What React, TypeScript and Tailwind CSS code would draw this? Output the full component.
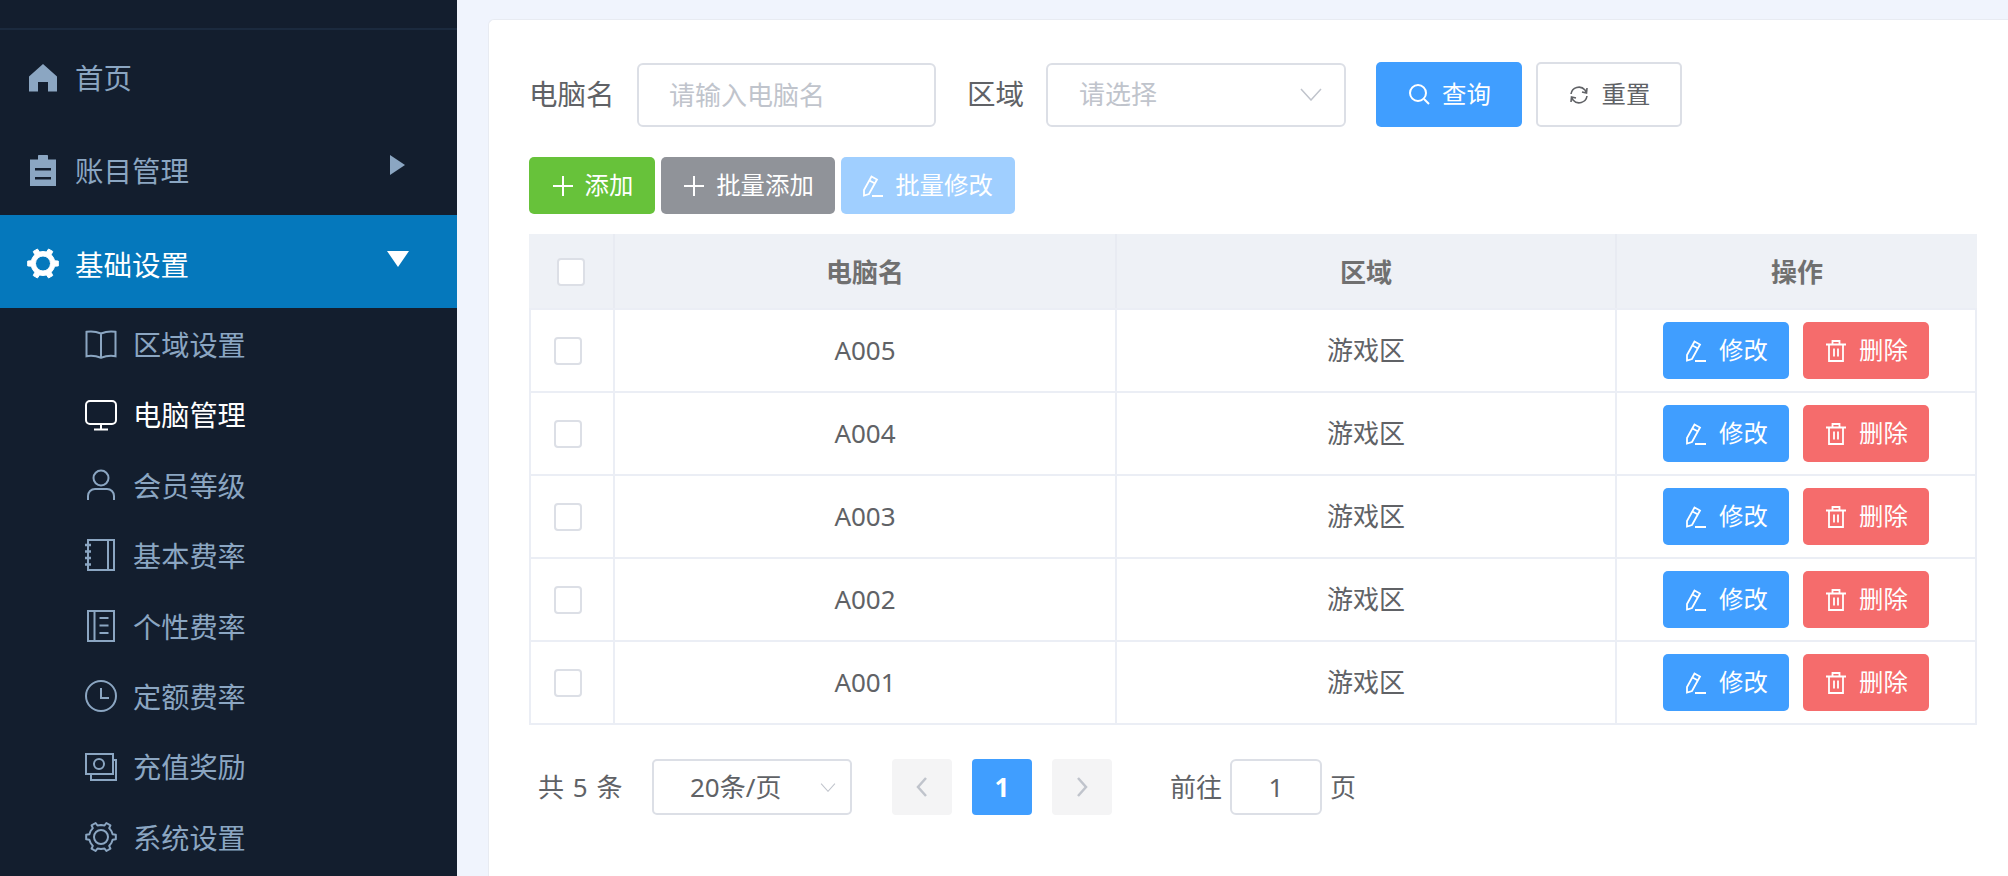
import React from 'react';

const cjk = "font-['Noto_Sans','Noto_Sans_CJK_SC',sans-serif]";

// six tooth gear outline, teeth pointing left and right like the reference
const gearPath = (outer: number, inner: number) => {
    const pts: string[] = [];
    for (let i = 0; i < 6; i++) {
        const a = (i * 60 * Math.PI) / 180;
        [[-30, inner], [-13, inner], [-9, outer], [9, outer], [13, inner]].forEach(([d, r]) => {
            const t = a + (d * Math.PI) / 180;
            pts.push(`${(16 + r * Math.cos(t)).toFixed(2)} ${(16 + r * Math.sin(t)).toFixed(2)}`);
        });
    }
    return `M${pts.join('L')}Z`;
};

const HomeIcon = () => (
    <svg viewBox="0 0 28 28" className="w-[28px] h-[28px]" fill="currentColor">
        <path d="M14 0L28 12.500V27.500H19V18H9V27.500H0V12.500z" />
    </svg>
);

const ClipboardIcon = () => (
    <svg viewBox="0 0 26 31" className="w-[26px] h-[31px]" fill="currentColor">
        <path fillRule="evenodd" d="M8 4.500V1c0-.6.4-1 1-1h8c.6 0 1 .4 1 1v3.500h8V31H0V4.500h8zM5 13v2.500h16V13H5zM5 22v2.500h16V22H5z" />
    </svg>
);

const GearFill = () => (
    <svg viewBox="0 0 32 32" className="w-[33px] h-[33px]" fill="currentColor">
        <path fillRule="evenodd" strokeLinejoin="round" stroke="currentColor" strokeWidth="1" d={`${gearPath(15.500, 12)}M16 8.500a7.500 7.500 0 1 0 0 15a7.500 7.500 0 1 0 0-15z`} />
    </svg>
);

const BookIcon = () => (
    <svg viewBox="0 0 32 32" className="w-[32px] h-[32px]" fill="none" stroke="currentColor" strokeWidth="2">
        <path d="M16 5.500C12 3.800 6 3 1.500 3.800v24.400c4.500-.8 10.500 0 14.500 1.500 4-1.500 10-2.300 14.500-1.500V3.800C26 3 20 3.800 16 5.500zM16 5.500v24" />
    </svg>
);

const MonitorIcon = () => (
    <svg viewBox="0 0 32 32" className="w-[32px] h-[32px]" fill="none" stroke="currentColor" strokeWidth="2">
        <path d="M5 2h22a4 4 0 0 1 4 4v15a4 4 0 0 1-4 4H5a4 4 0 0 1-4-4V6a4 4 0 0 1 4-4zM16 25v5M9 30.500h14" />
    </svg>
);

const UserIcon = () => (
    <svg viewBox="0 0 32 32" className="w-[32px] h-[32px]" fill="none" stroke="currentColor" strokeWidth="2">
        <circle cx="16" cy="9" r="7.500" />
        <path d="M3 31v-4a7 7 0 0 1 7-7h12a7 7 0 0 1 7 7v4" />
    </svg>
);

const NotebookOne = () => (
    <svg viewBox="0 0 32 32" className="w-[32px] h-[32px]" fill="none" stroke="currentColor" strokeWidth="2">
        <path d="M3 1h26v30H3zM23 1v30" />
        <path d="M0 6h6M0 12.500h6M0 19h6M0 25.500h6" strokeWidth="2.500" />
    </svg>
);

const NotebookTwo = () => (
    <svg viewBox="0 0 32 32" className="w-[32px] h-[32px]" fill="none" stroke="currentColor" strokeWidth="2">
        <path d="M3 1h26v30H3zM9.500 1v30M14.500 8h9M14.500 15.500h9M14.500 23h9" />
    </svg>
);

const ClockIcon = () => (
    <svg viewBox="0 0 32 32" className="w-[32px] h-[32px]" fill="none" stroke="currentColor" strokeWidth="2">
        <circle cx="16" cy="16" r="15" />
        <path d="M16 8v10h8" />
    </svg>
);

const MoneyIcon = () => (
    <svg viewBox="0 0 32 32" className="w-[32px] h-[32px]" fill="none" stroke="currentColor" strokeWidth="2">
        <path d="M1 3h27v20H1zM28 9h3v20H6v-6" />
        <circle cx="14" cy="13" r="5" />
    </svg>
);

const GearOutline = () => (
    <svg viewBox="0 0 32 32" className="w-[32px] h-[32px]" fill="none" stroke="currentColor" strokeWidth="2">
        <path d={gearPath(15, 12)} strokeLinejoin="round" />
        <circle cx="16" cy="16" r="7" />
    </svg>
);

const PencilIcon = () => (
    <svg viewBox="0 0 20 22" className="h-[22px] w-[20px]" fill="none" stroke="currentColor" strokeWidth="1.800">
        <path d="M8.500 1.500L14 4.500 6 19 1 20.500 1 15zM6.500 5.500L12 8.500M9 21h11" />
    </svg>
);

const PlusIcon = () => (
    <svg viewBox="0 0 20 20" className="w-[20px] h-[20px]" fill="none" stroke="currentColor" strokeWidth="2">
        <path d="M10 0v20M0 10h20" />
    </svg>
);

const TrashIcon = () => (
    <svg viewBox="0 0 20 22" className="w-[20px] h-[22px]" fill="none" stroke="currentColor" strokeWidth="1.800">
        <path d="M0 4.500h20M6.500 4.500V1h7v3.500M3 4.500V21h14V4.500M8 8.500v8M12 8.500v8" />
    </svg>
);

const SearchIcon = () => (
    <svg viewBox="0 0 21 21" className="w-[21px] h-[21px]" fill="none" stroke="currentColor" strokeWidth="2">
        <circle cx="9" cy="9" r="8" />
        <path d="M15 15l5 5" />
    </svg>
);

const RefreshIcon = () => (
    <svg viewBox="0 0 18 18" className="w-[18px] h-[18px]" fill="none" stroke="currentColor" strokeWidth="1.600">
        <path d="M1 8a8 8 0 0 1 14-4l1.500 3M17 2l-.5 5L12 6M17 10a8 8 0 0 1-14 4l-1.500-3M1 16l.5-5L6 12" />
    </svg>
);

const Chevron = ({ className }: { className: string }) => (
    <svg viewBox="0 0 22 13" className={className} fill="none" stroke="currentColor" strokeWidth="1.500">
        <path d="M1 1l10 11L21 1" />
    </svg>
);

const subMenus = [
    { label: '区域设置', icon: <BookIcon /> },
    { label: '电脑管理', icon: <MonitorIcon />, active: true },
    { label: '会员等级', icon: <UserIcon /> },
    { label: '基本费率', icon: <NotebookOne /> },
    { label: '个性费率', icon: <NotebookTwo /> },
    { label: '定额费率', icon: <ClockIcon /> },
    { label: '充值奖励', icon: <MoneyIcon /> },
    { label: '系统设置', icon: <GearOutline /> },
];

const rows = ['A005', 'A004', 'A003', 'A002', 'A001'];

const App: React.FC = () => {
    return (
        <div className={`flex h-[876px] w-[2008px] overflow-hidden bg-[#f0f4fd] ${cjk}`}>
            <aside className="w-[457px] shrink-0 bg-[#131e2e] text-[#8ba6c2]">
                <div className="h-[30px] border-b-2 border-[#1b2a3e]"></div>

                <div className="flex h-[92px] items-center gap-[16px] pl-[27px] pt-[3px] text-[28.5px]">
                    <span className="flex w-[32px] justify-center"><HomeIcon /></span>
                    <span className="pt-[2px]">首页</span>
                </div>
                <div className="relative flex h-[93px] items-center gap-[16px] pl-[27px] pt-[3px] text-[28.5px]">
                    <span className="flex w-[32px] justify-center"><ClipboardIcon /></span>
                    <span className="pt-[2px]">账目管理</span>
                    <span className="absolute left-[390px] top-[33px] h-0 w-0 border-y-[10px] border-l-[15px] border-y-transparent border-l-[#8ba6c2]"></span>
                </div>
                <div className="relative flex h-[93px] items-center gap-[16px] bg-[#0578bc] pl-[27px] pt-[3px] text-[28.5px] text-white">
                    <span className="flex w-[32px] justify-center"><GearFill /></span>
                    <span className="pt-[4px]">基础设置</span>
                    <span className="absolute left-[387px] top-[36px] h-0 w-0 border-x-[11px] border-t-[16px] border-x-transparent border-t-white"></span>
                </div>

                {subMenus.map((item) => (
                    <div
                        key={item.label}
                        className={`flex h-[70.4px] items-center gap-[16px] pl-[85px] pt-[2px] text-[28.2px] ${item.active ? 'text-white' : ''}`}
                    >
                        {item.icon}
                        <span className="pt-[2px]">{item.label}</span>
                    </div>
                ))}
            </aside>

            <main className="flex-1 pl-[31px] pt-[19px]">
                <div className="h-full rounded-tl-[6px] border-l border-t border-[#e8ebf2] bg-white pl-[40px] pt-[42px]">
                    <div className="flex items-center">
                        <span className="w-[108px] text-[28.5px] text-[#606266]">电脑名</span>
                        <input
                            placeholder="请输入电脑名"
                            className="h-[64px] w-[299px] rounded-[6px] border-2 border-[#dcdfe6] pl-[30px] text-[26px] outline-none placeholder:text-[#c0c4cc]"
                        />
                        <span className="ml-[31px] w-[79px] text-[28.5px] text-[#606266]">区域</span>
                        <div className="flex h-[64px] w-[300px] items-center justify-between rounded-[6px] border-2 border-[#dcdfe6] pl-[31px] pr-[22px] text-[26px] text-[#c0c4cc]">
                            <span>请选择</span>
                            <Chevron className="h-[13px] w-[22px]" />
                        </div>
                        <button className="ml-[30px] flex h-[65px] w-[146px] items-center justify-center gap-[12px] rounded-[5px] bg-[#409eff] pl-[2px] text-[24.4px] text-white">
                            <SearchIcon />
                            查询
                        </button>
                        <button className="ml-[14px] flex h-[65px] w-[146px] items-center justify-center gap-[14px] rounded-[5px] border-2 border-[#dcdfe6] bg-white pl-[2px] text-[24.4px] text-[#606266]">
                            <RefreshIcon />
                            重置
                        </button>
                    </div>

                    <div className="mt-[30px] flex gap-[6px]">
                        <button className="flex h-[57px] w-[126px] items-center justify-center gap-[12px] rounded-[5px] bg-[#67c23a] pl-[2px] text-[24.4px] text-white">
                            <PlusIcon />
                            添加
                        </button>
                        <button className="flex h-[57px] w-[174px] items-center justify-center gap-[12px] rounded-[5px] bg-[#909399] pl-[2px] text-[24.4px] text-white">
                            <PlusIcon />
                            批量添加
                        </button>
                        <button className="flex h-[57px] w-[174px] items-center justify-center gap-[12px] rounded-[5px] bg-[#a0cfff] text-[24.4px] text-white">
                            <PencilIcon />
                            批量修改
                        </button>
                    </div>

                    <div className="mt-[20px] w-[1448px] text-[26px] text-[#606266]">
                        <div className="flex h-[74px] items-center bg-[#eef1f6] font-bold text-[#707070]">
                            <div className="flex h-full w-[86px] items-center justify-center border-r-2 border-[#e8ebf2] pt-[2px]">
                                <span className="h-[28px] w-[28px] rounded-[4px] border-2 border-[#dcdfe6] bg-white"></span>
                            </div>
                            <div className="flex h-full w-[502px] items-center justify-center border-r-2 border-[#e8ebf2] pt-[2px]">电脑名</div>
                            <div className="flex h-full w-[500px] items-center justify-center border-r-2 border-[#e8ebf2] pt-[2px]">区域</div>
                            <div className="flex h-full w-[360px] items-center justify-center pt-[2px]">操作</div>
                        </div>
                        <div className="border-t-2 border-[#ebeef5]">
                            {rows.map((name) => (
                                <div key={name} className="flex h-[83px] border-x-2 border-b-2 border-[#ebeef5]">
                                    <div className="flex w-[84px] items-center justify-center border-r-2 border-[#ebeef5] pr-[8px]">
                                        <span className="h-[28px] w-[28px] rounded-[4px] border-2 border-[#dcdfe6]"></span>
                                    </div>
                                    <div className="flex w-[502px] items-center justify-center border-r-2 border-[#ebeef5]">{name}</div>
                                    <div className="flex w-[500px] items-center justify-center border-r-2 border-[#ebeef5]">游戏区</div>
                                    <div className="flex flex-1 items-center justify-center gap-[14px]">
                                        <button className="flex h-[57px] w-[126px] items-center justify-center gap-[13px] rounded-[5px] bg-[#409eff] pl-[2px] text-[24.4px] text-white">
                                            <PencilIcon />
                                            修改
                                        </button>
                                        <button className="flex h-[57px] w-[126px] items-center justify-center gap-[13px] rounded-[5px] bg-[#f56c6c] pl-[2px] text-[24.4px] text-white">
                                            <TrashIcon />
                                            删除
                                        </button>
                                    </div>
                                </div>
                            ))}
                        </div>
                    </div>

                    <div className="mt-[34px] flex items-center text-[26px] text-[#606266]">
                        <span className="ml-[9px] w-[114px] [word-spacing:2px]">共 5 条</span>
                        <div className="flex h-[56px] w-[200px] items-center justify-between rounded-[5px] border-2 border-[#dcdfe6] pl-[36px] pr-[14px]">
                            <span>20条/页</span>
                            <Chevron className="h-[9px] w-[16px] text-[#c0c4cc]" />
                        </div>
                        <button className="ml-[40px] flex h-[56px] w-[60px] items-center justify-center rounded-[4px] bg-[#f4f4f5] text-[#c0c4cc]">
                            <svg viewBox="0 0 12 20" className="h-[20px] w-[12px]" fill="none" stroke="currentColor" strokeWidth="2.500"><path d="M10 1L2 10l8 9" /></svg>
                        </button>
                        <button className="ml-[20px] flex h-[56px] w-[60px] items-center justify-center rounded-[4px] bg-[#409eff] font-bold text-white">1</button>
                        <button className="ml-[20px] flex h-[56px] w-[60px] items-center justify-center rounded-[4px] bg-[#f4f4f5] text-[#c0c4cc]">
                            <svg viewBox="0 0 12 20" className="h-[20px] w-[12px]" fill="none" stroke="currentColor" strokeWidth="2.500"><path d="M2 1l8 9-8 9" /></svg>
                        </button>
                        <span className="ml-[58px]">前往</span>
                        <div className="ml-[8px] flex h-[56px] w-[92px] items-center justify-center rounded-[6px] border-2 border-[#dcdfe6]">1</div>
                        <span className="ml-[8px]">页</span>
                    </div>
                </div>
            </main>
        </div>
    );
};

export default App;
